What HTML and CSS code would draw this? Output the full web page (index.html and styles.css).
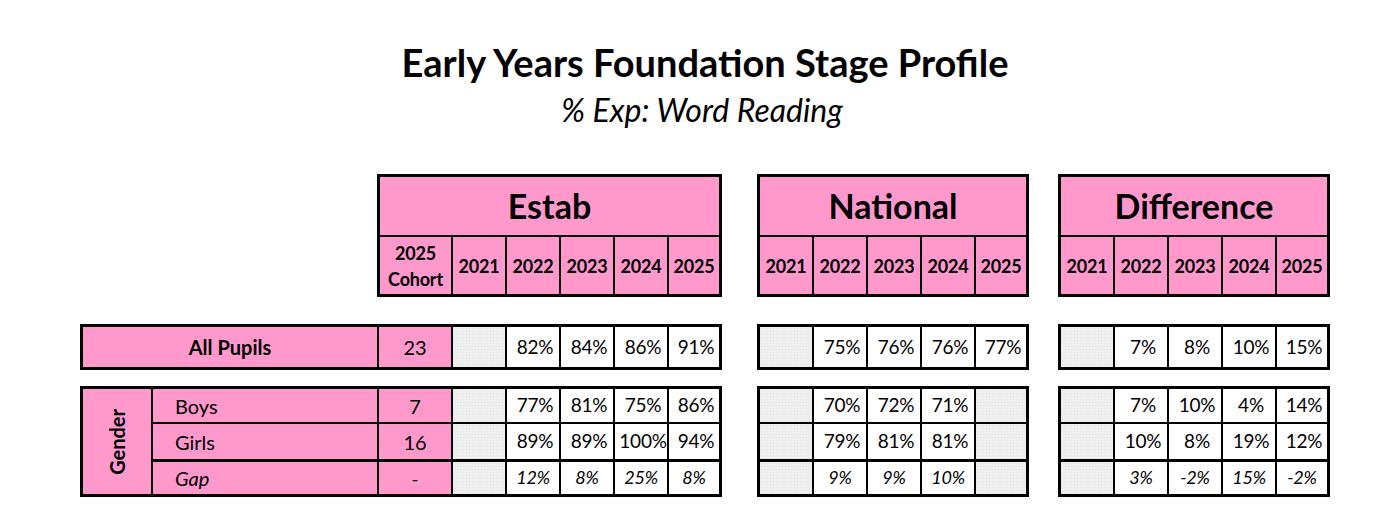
FILE: index.html
```html
<!DOCTYPE html>
<html lang="en">
<head>
<meta charset="utf-8">
<title>Early Years Foundation Stage Profile</title>
<link rel="stylesheet" href="styles.css">
</head>
<body>
<div class="page">
  <h1 class="title">Early Years Foundation Stage Profile</h1>
  <p class="subtitle">% Exp: Word Reading</p>

  <div class="sheet">
    <div class="row head-row">
      <div class="box head estab-head">
        <div class="cell name">Estab</div>
        <div class="cell yr cohort">2025<br>Cohort</div>
        <div class="cell yr">2021</div>
        <div class="cell yr">2022</div>
        <div class="cell yr">2023</div>
        <div class="cell yr">2024</div>
        <div class="cell yr">2025</div>
      </div>
      <div class="box head nat-head">
        <div class="cell name">National</div>
        <div class="cell yr">2021</div>
        <div class="cell yr">2022</div>
        <div class="cell yr">2023</div>
        <div class="cell yr">2024</div>
        <div class="cell yr">2025</div>
      </div>
      <div class="box head diff-head">
        <div class="cell name">Difference</div>
        <div class="cell yr">2021</div>
        <div class="cell yr">2022</div>
        <div class="cell yr">2023</div>
        <div class="cell yr">2024</div>
        <div class="cell yr">2025</div>
      </div>
    </div>

    <div class="row all-row">
      <div class="box data estab-all">
        <div class="cell label all-label">All Pupils</div>
        <div class="cell num">23</div>
        <div class="cell blank"></div>
        <div class="cell val">82%</div>
        <div class="cell val">84%</div>
        <div class="cell val">86%</div>
        <div class="cell val">91%</div>
      </div>
      <div class="box data nat-data">
        <div class="cell blank"></div>
        <div class="cell val">75%</div>
        <div class="cell val">76%</div>
        <div class="cell val">76%</div>
        <div class="cell val">77%</div>
      </div>
      <div class="box data diff-data">
        <div class="cell blank"></div>
        <div class="cell val">7%</div>
        <div class="cell val">8%</div>
        <div class="cell val">10%</div>
        <div class="cell val">15%</div>
      </div>
    </div>

    <div class="row gender-row">
      <div class="box group estab-group">
        <div class="cell group-name"><span>Gender</span></div>
        <div class="cell label sub">Boys</div>
        <div class="cell num">7</div>
        <div class="cell blank"></div>
        <div class="cell val">77%</div>
        <div class="cell val">81%</div>
        <div class="cell val">75%</div>
        <div class="cell val">86%</div>

        <div class="cell label sub">Girls</div>
        <div class="cell num">16</div>
        <div class="cell blank"></div>
        <div class="cell val">89%</div>
        <div class="cell val">89%</div>
        <div class="cell val">100%</div>
        <div class="cell val">94%</div>

        <div class="cell label sub gap">Gap</div>
        <div class="cell num gap">-</div>
        <div class="cell blank gap"></div>
        <div class="cell val gap">12%</div>
        <div class="cell val gap">8%</div>
        <div class="cell val gap">25%</div>
        <div class="cell val gap">8%</div>
      </div>
      <div class="box group nat-group">
        <div class="cell blank"></div>
        <div class="cell val">70%</div>
        <div class="cell val">72%</div>
        <div class="cell val">71%</div>
        <div class="cell blank"></div>

        <div class="cell blank"></div>
        <div class="cell val">79%</div>
        <div class="cell val">81%</div>
        <div class="cell val">81%</div>
        <div class="cell blank"></div>

        <div class="cell blank gap"></div>
        <div class="cell val gap">9%</div>
        <div class="cell val gap">9%</div>
        <div class="cell val gap">10%</div>
        <div class="cell blank gap"></div>
      </div>
      <div class="box group diff-group">
        <div class="cell blank"></div>
        <div class="cell val">7%</div>
        <div class="cell val">10%</div>
        <div class="cell val">4%</div>
        <div class="cell val">14%</div>

        <div class="cell blank"></div>
        <div class="cell val">10%</div>
        <div class="cell val">8%</div>
        <div class="cell val">19%</div>
        <div class="cell val">12%</div>

        <div class="cell blank gap"></div>
        <div class="cell val gap">3%</div>
        <div class="cell val gap">-2%</div>
        <div class="cell val gap">15%</div>
        <div class="cell val gap">-2%</div>
      </div>
    </div>
  </div>
</div>
</body>
</html>
```

FILE: styles.css
```css
* { box-sizing: border-box; }

html, body {
  margin: 0;
  padding: 0;
  background: #ffffff;
}

body {
  font-family: Lato, "Liberation Sans", sans-serif;
  color: #000000;
  width: 1400px;
  height: 507px;
  overflow: hidden;
}

.page {
  padding-top: 40px;
}

.title {
  margin: 0;
  height: 44px;
  line-height: 44px;
  font-size: 38px;
  font-weight: 700;
  text-align: center;
  padding-left: 10px;
}

.subtitle {
  margin: 0;
  height: 52px;
  line-height: 52px;
  font-size: 32px;
  font-style: italic;
  text-align: center;
  padding-left: 4px;
}

.sheet {
  padding-left: 80px;
  margin-top: 38px;
  display: flex;
  flex-direction: column;
}

.row {
  display: flex;
  align-items: flex-start;
}

.head-row { padding-left: 297px; }
.all-row { margin-top: 27px; }
.gender-row { margin-top: 16px; }

.box {
  display: grid;
  background: #000000;
  padding: 3px;
  gap: 2px;
}

.nat-head, .nat-data, .nat-group { margin-left: 35px; }
.diff-head, .diff-data, .diff-group { margin-left: 29px; }

.estab-head {
  grid-template-columns: 71px 52px 52px 52px 52px 50px;
  grid-template-rows: 58px 57px;
}
.nat-head, .diff-head {
  grid-template-columns: 52px 52px 52px 52px 50px;
  grid-template-rows: 58px 57px;
}

.estab-all {
  grid-template-columns: 294px 72px 52px 52px 52px 52px 50px;
  grid-template-rows: 40px;
}
.nat-data, .diff-data {
  grid-template-columns: 52px 52px 52px 52px 50px;
  grid-template-rows: 40px;
}

.estab-group {
  grid-template-columns: 68px 224px 72px 52px 52px 52px 52px 50px;
  grid-template-rows: 33px 35px 33px;
}
.nat-group, .diff-group {
  grid-template-columns: 52px 52px 52px 52px 50px;
  grid-template-rows: 33px 35px 33px;
}

.cell {
  display: flex;
  align-items: center;
  justify-content: center;
  background: #ffffff;
  font-size: 19px;
  line-height: 1.2;
  white-space: nowrap;
}

.name {
  grid-column: 1 / -1;
  background: #ff99cc;
  font-size: 34px;
  font-weight: 700;
  padding-top: 0;
}

.yr {
  background: #ff99cc;
  font-size: 18px;
  font-weight: 700;
  padding-top: 3px;
  letter-spacing: -0.2px;
}

.cohort {
  text-align: center;
  line-height: 26px;
  padding-top: 0;
}

.label, .num, .group-name {
  background: #ff99cc;
}

.label { font-size: 20px; }
.all-label { font-weight: 700; }
.num { font-size: 20px; }

.sub {
  justify-content: flex-start;
  padding-left: 22px;
}

.group-name {
  grid-row: 1 / 4;
  font-weight: 700;
  font-size: 20px;
}

.group-name span {
  writing-mode: vertical-rl;
  transform: rotate(180deg);
}

.blank {
  background-color: #efefef;
  background-image: radial-gradient(#e2e2e2 0.6px, transparent 0.8px);
  background-size: 3px 3px;
}

.val { font-size: 19px; padding-left: 4px; letter-spacing: -0.2px; }

.gap {
  margin-top: 1px;
  font-style: italic;
}

.val.gap { font-size: 18px; padding-left: 0; }
```
